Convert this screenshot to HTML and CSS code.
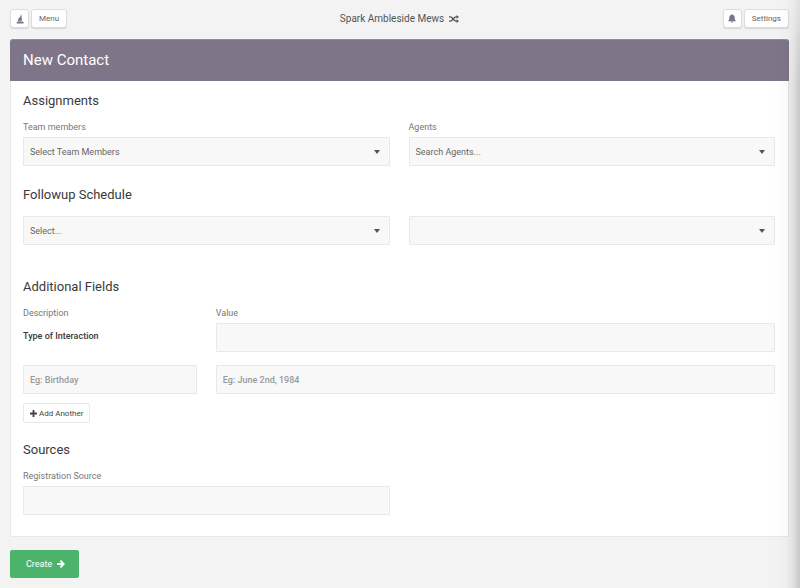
FILE: index.html
```html
<!DOCTYPE html>
<html lang="en">
<head>
    <meta charset="UTF-8">
    <meta name="viewport" content="width=device-width, initial-scale=1.0">
    <title>New Contact</title>
    <link rel="stylesheet" href="styles.css">
</head>
<body>
    <header class="topbar">
        <div class="topbar-group">
            <button type="button" class="btn btn-icon" aria-label="Home">
                <svg width="8" height="10" viewBox="0 0 8 10" fill="currentColor">
                    <path d="M5.2 0 L6.1 7 C4.6 6.6 3.1 6.9 1.4 7.6 C2.1 6.8 1.6 6.3 2.5 5.4 C2.1 4.8 2.5 4.4 3.2 4 C4.1 3 4.7 1.7 5.2 0 Z"/>
                    <path d="M0.8 8.1 C2.8 7 5.2 7.1 7.8 8 L7.4 9.4 L0.6 9.4 Z"/>
                </svg>
            </button>
            <button type="button" class="btn">Menu</button>
        </div>
        <a href="#" class="project">
            Spark Ambleside Mews
            <svg width="10" height="8" viewBox="0 0 10 8" fill="none" stroke="currentColor" stroke-width="1.3">
                <path d="M0 1.9 H1.3 C3.8 1.9 4.6 6.1 7.1 6.1 H8"/>
                <path d="M0 6.1 H1.3 C3.8 6.1 4.6 1.9 7.1 1.9 H8"/>
                <path d="M7.6 0 L10 1.9 L7.6 3.8 Z M7.6 4.2 L10 6.1 L7.6 8 Z" fill="currentColor" stroke="none"/>
            </svg>
        </a>
        <div class="topbar-group topbar-right">
            <button type="button" class="btn btn-icon" aria-label="Notifications">
                <svg width="8" height="9" viewBox="0 0 8 9" fill="currentColor">
                    <path d="M3.5 0.4 C3.5 -0.1 4.5 -0.1 4.5 0.4 L4.5 0.7 C6.2 1 6.7 2.3 6.7 3.6 C6.7 5.4 7.2 6.3 8 7.2 H0 C0.8 6.3 1.3 5.4 1.3 3.6 C1.3 2.3 1.8 1 3.5 0.7 Z"/>
                    <path d="M2.9 7.6 H5.1 C5.1 9.2 2.9 9.2 2.9 7.6 Z"/>
                </svg>
            </button>
            <button type="button" class="btn">Settings</button>
        </div>
    </header>

    <form class="contact-form">
        <div class="card">
            <h1 class="card-title">New Contact</h1>
            <div class="card-body">
                <section class="section">
                    <h2>Assignments</h2>
                    <div class="row">
                        <div class="field half">
                            <label for="team">Team members</label>
                            <div class="select-wrap">
                                <select id="team"><option>Select Team Members</option></select>
                            </div>
                        </div>
                        <div class="field half">
                            <label for="agents">Agents</label>
                            <div class="select-wrap">
                                <select id="agents"><option>Search Agents...</option></select>
                            </div>
                        </div>
                    </div>
                </section>

                <section class="section section-followup">
                    <h2>Followup Schedule</h2>
                    <div class="row">
                        <div class="select-wrap half">
                            <select aria-label="Followup schedule"><option>Select...</option></select>
                        </div>
                        <div class="select-wrap half">
                            <select aria-label="Followup step"><option></option></select>
                        </div>
                    </div>
                </section>

                <section class="section section-extra">
                    <h2>Additional Fields</h2>
                    <div class="row row-head">
                        <span class="quarter">Description</span>
                        <span class="rest">Value</span>
                    </div>
                    <div class="row row-value">
                        <label class="quarter field-name" for="interaction">Type of Interaction</label>
                        <input class="rest" type="text" id="interaction">
                    </div>
                    <div class="row row-value">
                        <input class="quarter" type="text" placeholder="Eg: Birthday" aria-label="Description">
                        <input class="rest" type="text" placeholder="Eg: June 2nd, 1984" aria-label="Value">
                    </div>
                    <button type="button" class="btn-add">
                        <svg width="7" height="7" viewBox="0 0 7 7" fill="currentColor">
                            <path d="M2.6 0 H4.4 V2.6 H7 V4.4 H4.4 V7 H2.6 V4.4 H0 V2.6 H2.6 Z"/>
                        </svg>
                        Add Another
                    </button>
                </section>

                <section class="section">
                    <h2>Sources</h2>
                    <div class="row">
                        <div class="field half">
                            <label for="source">Registration Source</label>
                            <input type="text" id="source">
                        </div>
                    </div>
                </section>
            </div>
        </div>

        <button type="submit" class="btn-create">
            Create
            <svg width="8" height="8" viewBox="0 0 8 8" fill="none" stroke="currentColor" stroke-width="1.8">
                <path d="M0 4 H6.5 M3.4 0.6 L6.8 4 L3.4 7.4"/>
            </svg>
        </button>
    </form>

    <div class="edge-shadow"></div>
</body>
</html>
```

FILE: styles.css
```css
* {
    box-sizing: border-box;
}
body {
    margin: 0;
    padding: 9px 11px 10px 10px;
    min-height: 100vh;
    background: #f3f3f3;
    color: #3a3a3a;
    font-family: Roboto, "Liberation Sans", sans-serif;
    font-size: 9px;
    line-height: 11px;
}
button, input, select {
    font-family: inherit;
}

/* top bar */
.topbar {
    display: grid;
    grid-template-columns: 1fr auto 1fr;
    align-items: center;
    margin-bottom: 11px;
}
.topbar-group {
    display: flex;
    gap: 2px;
}
.topbar-right {
    justify-content: flex-end;
}
.btn {
    height: 19px;
    padding: 0 7px;
    border: 1px solid #ddd;
    border-radius: 3px;
    background: #fff;
    box-shadow: 0 1px 1px rgba(0, 0, 0, 0.12);
    color: #666;
    font-size: 8px;
}
.btn-icon {
    display: flex;
    align-items: center;
    justify-content: center;
    width: 19px;
    padding: 0;
    color: #7f7589;
}
.project {
    display: flex;
    align-items: center;
    gap: 5px;
    color: #555;
    font-size: 10px;
    text-decoration: none;
}

/* card */
.card {
    border: 1px solid #e8e8e8;
    border-top: 0;
    border-radius: 3px 3px 0 0;
    background: #fff;
}
.card-title {
    margin: 0 -1px;
    padding: 0 13px;
    border-top: 1px solid #958c9e;
    border-radius: 3px 3px 0 0;
    background: #7f7589;
    color: #fff;
    font-size: 15px;
    font-weight: 400;
    line-height: 41px;
}
.card-body {
    padding: 11px 13px 21px 12px;
}
.section {
    margin-bottom: 20px;
}
.section-followup {
    margin-bottom: 33px;
}
.section-extra {
    margin-bottom: 18px;
}
.section:last-child {
    margin-bottom: 0;
}
h2 {
    margin: 0 0 12px;
    font-size: 13px;
    font-weight: 400;
    line-height: 18px;
}
.row {
    display: grid;
    grid-template-columns: repeat(4, 1fr);
    column-gap: 19px;
}
.half {
    grid-column: span 2;
}
.quarter {
    grid-column: span 1;
}
.rest {
    grid-column: span 3;
}
.row-head {
    margin-bottom: 4px;
    color: #777;
}
.row-value {
    margin-bottom: 13px;
}
.row-value + .row-value {
    margin-bottom: 9px;
}
.field label {
    display: block;
    margin-bottom: 4px;
    color: #777;
}
.field-name {
    padding-top: 8px;
    font-weight: 500;
}
input, select {
    display: block;
    width: 100%;
    height: 29px;
    padding: 0 6px;
    border: 1px solid #e8e8e8;
    border-radius: 1px;
    background: #f8f8f8;
    color: #666;
    font-size: 9px;
}
input::placeholder {
    color: #999;
    font-weight: 500;
}
select {
    appearance: none;
}
.select-wrap {
    position: relative;
}
.select-wrap::after {
    content: "";
    position: absolute;
    top: 13px;
    right: 10px;
    border: 3px solid transparent;
    border-top: 4px solid #555;
    border-bottom: 0;
    pointer-events: none;
}
.btn-add {
    display: flex;
    align-items: center;
    gap: 2px;
    height: 20px;
    padding: 0 6px;
    border: 1px solid #e8e8e8;
    border-radius: 2px;
    background: #fff;
    color: #444;
    font-size: 8px;
}
.btn-create {
    display: flex;
    align-items: center;
    gap: 5px;
    height: 28px;
    margin-top: 13px;
    padding: 0 14px 0 16px;
    border: 0;
    border-radius: 2px;
    background: #4cb36c;
    color: #fff;
    font-size: 9px;
}

/* shade along the right edge of the window */
.edge-shadow {
    position: fixed;
    top: 0;
    right: 0;
    bottom: 0;
    width: 28px;
    background: linear-gradient(to right, rgba(0, 0, 0, 0), rgba(0, 0, 0, 0.02) 50%, rgba(0, 0, 0, 0.07) 75%, rgba(0, 0, 0, 0.18));
    -webkit-mask-image: linear-gradient(rgba(0, 0, 0, 0.4), #000 80px);
    mask-image: linear-gradient(rgba(0, 0, 0, 0.4), #000 80px);
    pointer-events: none;
}
```
